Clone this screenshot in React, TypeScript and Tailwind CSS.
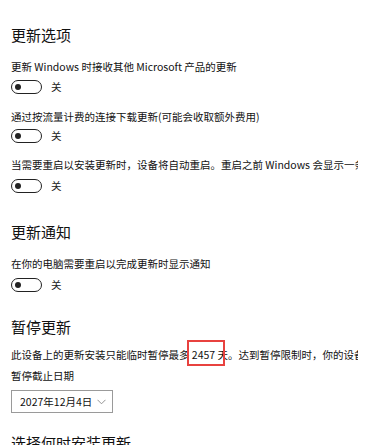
import React from "react";

const font = { fontFamily: '"Noto Sans CJK SC", "Noto Sans", sans-serif' };

function Toggle({ className = "" }: { className?: string }) {
  return (
    <div className={"flex h-[16px] items-center " + className}>
      <div className="relative h-[14px] w-[31px] rounded-full border-[1.5px] border-[#222]">
        <div className="absolute left-[3px] top-[2.5px] h-[6px] w-[6px] rounded-full bg-[#222]" />
      </div>
      <span className="ml-[9px] text-[10.5px] leading-[16px] text-[#222]">关</span>
    </div>
  );
}

function Label({ children, className = "" }: { children: React.ReactNode; className?: string }) {
  return (
    <div className={"h-[16px] whitespace-nowrap text-[10.5px] leading-[16px] text-[#111] " + className}>
      {children}
    </div>
  );
}

function Heading({ children, className = "" }: { children: React.ReactNode; className?: string }) {
  return (
    <div className={"h-[20px] whitespace-nowrap text-[15px] leading-[20px] text-[#111] " + className}>
      {children}
    </div>
  );
}

export default function App() {
  return (
    <div className="h-[445px] w-[386px] overflow-hidden bg-white" style={font}>
      <div className="flex w-[358px] flex-col overflow-hidden pl-[11px] pt-[25px]">
        <Heading>更新选项</Heading>
        <Label className="mt-[14px]">更新 Windows 时接收其他 Microsoft 产品的更新</Label>
        <Toggle className="mt-[4px]" />
        <Label className="mt-[14px]">通过按流量计费的连接下载更新(可能会收取额外费用)</Label>
        <Toggle className="mt-[3px]" />
        <Label className="mt-[13px]">当需要重启以安装更新时，设备将自动重启。重启之前 Windows 会显示一条通知。</Label>
        <Toggle className="mt-[5px]" />
        <Heading className="mt-[28px]">更新通知</Heading>
        <Label className="mt-[14px]">在你的电脑需要重启以完成更新时显示通知</Label>
        <Toggle className="mt-[5px]" />
        <Heading className="mt-[24px]">暂停更新</Heading>
        <div className="relative mt-[10px]">
          <Label>此设备上的更新安装只能临时暂停最多 2457 天。达到暂停限制时，你的设备需要获取新的更新。</Label>
          <div className="absolute left-[176px] top-[-7px] h-[26px] w-[38px] border-2 border-[#e8423f]" />
        </div>
        <Label className="mt-[5px]">暂停截止日期</Label>
        <div className="mt-[6px] flex h-[23px] w-[102px] items-center border border-[#9a9a9a] pl-[8px] pr-[6px]">
          <span className="text-[10.5px] leading-[16px] text-[#111]">2027年12月4日</span>
          <svg className="ml-auto" width="9" height="6" viewBox="0 0 9 6">
            <path d="M0.5 0.8 L4.5 4.8 L8.5 0.8" fill="none" stroke="#888" strokeWidth="0.9" />
          </svg>
        </div>
        <Heading className="mt-[20px]">选择何时安装更新</Heading>
      </div>
    </div>
  );
}
